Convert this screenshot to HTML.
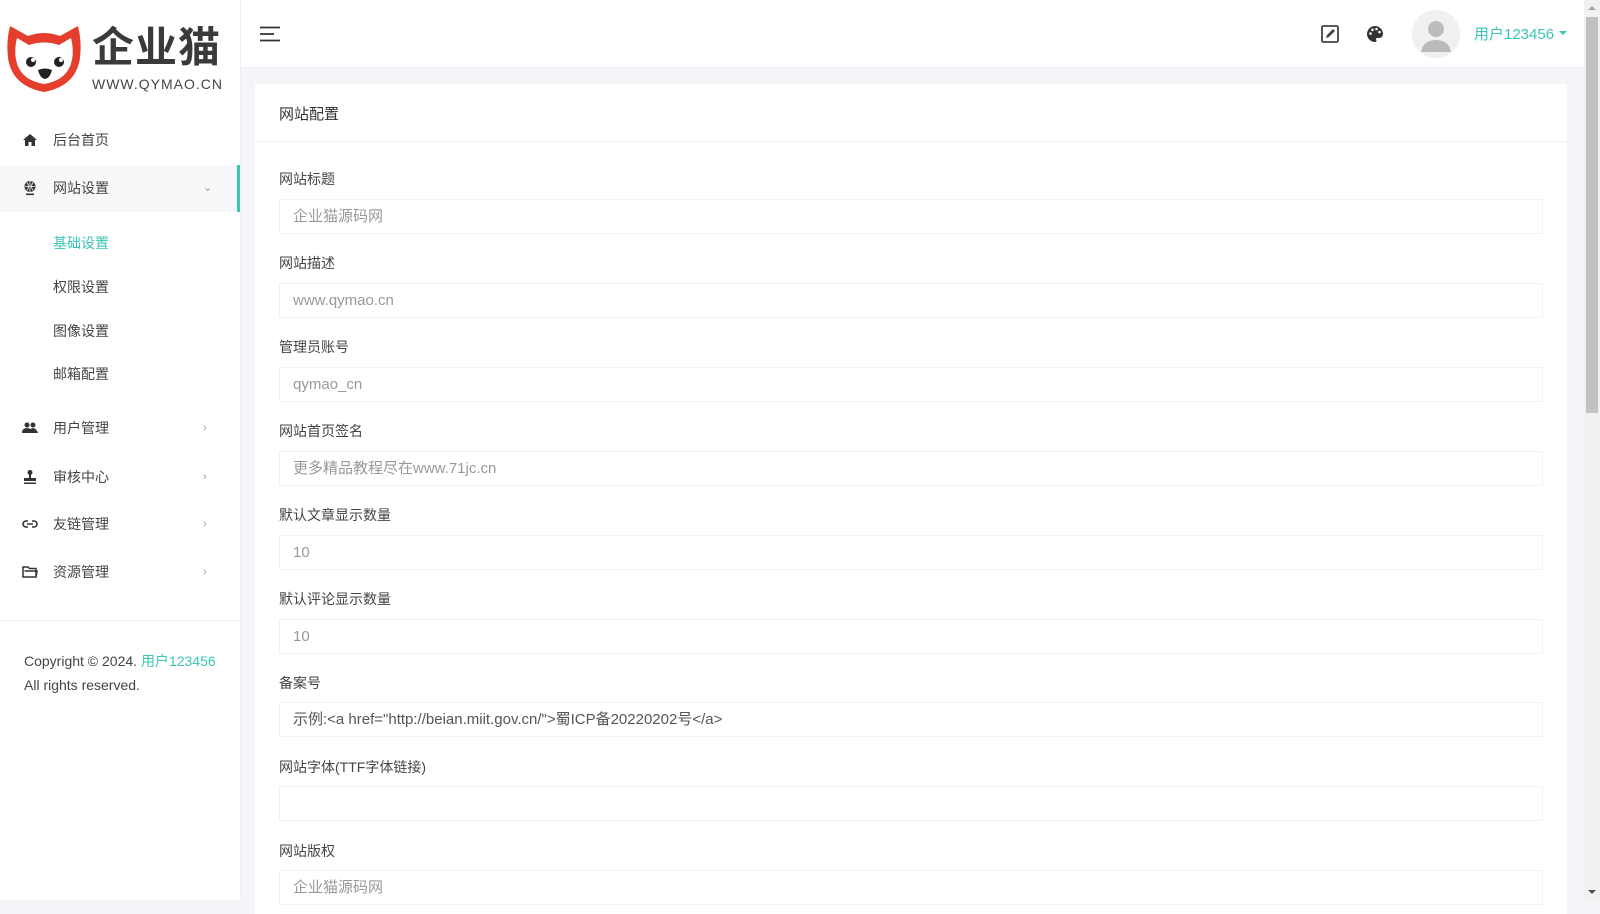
<!DOCTYPE html>
<html><head><meta charset="utf-8">
<style>
*{box-sizing:border-box;margin:0;padding:0}
body{width:1600px;height:900px;overflow:hidden;background:#f3f5f9;font-family:"Liberation Sans","Noto Sans CJK SC",sans-serif;font-size:14px;color:#444;position:relative}
.side{position:absolute;left:0;top:0;width:241px;height:900px;background:#fff;border-right:1px solid #eceef2}
.top{position:absolute;left:241px;top:0;width:1343px;height:68px;background:#fff;border-bottom:1px solid #eceef2}
.mi{position:absolute;left:0;width:240px;height:47px;line-height:47px}
.mi .ic{position:absolute;left:22px;top:15px;width:16px;height:16px}
.mi .t{position:absolute;left:53px;color:#444}
.mi .ar{position:absolute;left:203px;color:#999;font-size:11px}
.sub{position:absolute;left:53px;color:#444}
.card{position:absolute;left:255px;top:84px;width:1312px;height:830px;background:#fff}
.lbl{position:absolute;left:279px;color:#444;font-size:14px}
.inp{position:absolute;left:279px;width:1264px;height:35px;border:1px solid #f0f1f4;border-radius:2px;color:#999;line-height:33px;padding-left:13px;font-size:15px}
.sb{position:absolute;left:1584px;top:0;width:16px;height:900px;background:#f1f1f1}
</style></head><body>
<div class="side">
 <svg style="position:absolute;left:4px;top:22px" width="80" height="72" viewBox="0 0 80 72">
  <path d="M6 4 L24 14 Q40 8 56 14 L74 4 Q78 20 76 36 Q72 64 40 70 Q8 64 4 36 Q2 20 6 4Z" fill="#e63e2c"/>
  <path d="M13 16 L25 23 Q40 18 55 23 L67 16 Q70 28 68 38 Q64 58 40 62 Q16 58 12 38 Q10 28 13 16Z" fill="#fff"/>
  <circle cx="27" cy="40" r="5" fill="#222"/><circle cx="55" cy="40" r="5" fill="#222"/>
  <circle cx="29" cy="38" r="2" fill="#fff"/><circle cx="57" cy="38" r="2" fill="#fff"/>
  <path d="M34 48 Q41 45 48 48 Q46 56 41 57 Q36 56 34 48Z" fill="#222"/>
 </svg>
 <div style="position:absolute;left:92px;top:22px;font-size:42px;font-weight:bold;color:#3a3a3a;line-height:46px;letter-spacing:1px;font-family:'Noto Sans CJK SC',sans-serif">企业猫</div>
 <div style="position:absolute;left:92px;top:76px;font-size:14px;color:#444;letter-spacing:1px">WWW.QYMAO.CN</div>

 <div class="mi" style="top:117px"><svg class="ic" viewBox="0 0 16 16"><path d="M8 2 L1 8 H3 V14 H6.5 V10 H9.5 V14 H13 V8 H15Z" fill="#333"/></svg><span class="t">后台首页</span></div>
 <div class="mi" style="top:165px;background:#f7f8fa"><svg class="ic" viewBox="0 0 16 16"><circle cx="8" cy="6.5" r="5.5" fill="#333"/><path d="M3 6.5h10M8 1v11M5 2.5q3 4 0 8M11 2.5q-3 4 0 8" stroke="#fff" stroke-width=".8" fill="none"/><rect x="4" y="13.5" width="8" height="1.6" fill="#333"/></svg><span class="t">网站设置</span><span class="ar">⌄</span></div>
 <div style="position:absolute;left:237px;top:165px;width:3px;height:47px;background:#3cc5b3"></div>
 <div class="sub" style="top:233px;color:#3cc5b3">基础设置</div>
 <div class="sub" style="top:277px">权限设置</div>
 <div class="sub" style="top:321px">图像设置</div>
 <div class="sub" style="top:364px">邮箱配置</div>
 <div class="mi" style="top:405px"><svg class="ic" viewBox="0 0 16 16"><circle cx="5" cy="5" r="2.5" fill="#333"/><circle cx="11" cy="5" r="2.5" fill="#333"/><path d="M0 13q0-5 5-5t5 5zM7 13q1-5 4-5t5 5z" fill="#333"/></svg><span class="t">用户管理</span><span class="ar">›</span></div>
 <div class="mi" style="top:454px"><svg class="ic" viewBox="0 0 16 16"><circle cx="8" cy="3.5" r="2.5" fill="#333"/><rect x="7" y="5" width="2" height="4" fill="#333"/><rect x="2" y="9" width="12" height="3" fill="#333"/><rect x="2" y="13.5" width="12" height="1.5" fill="#333"/></svg><span class="t">审核中心</span><span class="ar">›</span></div>
 <div class="mi" style="top:501px"><svg class="ic" viewBox="0 0 16 16"><path d="M6 5H4a3 3 0 0 0 0 6h2M10 5h2a3 3 0 0 1 0 6h-2M5 8h6" stroke="#333" stroke-width="1.6" fill="none"/></svg><span class="t">友链管理</span><span class="ar">›</span></div>
 <div class="mi" style="top:549px"><svg class="ic" viewBox="0 0 16 16"><path d="M1 3h5l1.5 1.5H14V13H1Z M2.5 7H15l-1 6" stroke="#333" stroke-width="1.5" fill="none"/></svg><span class="t">资源管理</span><span class="ar">›</span></div>
 <div style="position:absolute;left:0;top:620px;width:240px;border-top:1px solid #eceef2"></div>
 <div style="position:absolute;left:24px;top:649px;color:#444;line-height:24px">Copyright © 2024. <span style="color:#3cc5b3">用户123456</span><br>All rights reserved.</div>
</div>

<div class="top">
 <svg style="position:absolute;left:19px;top:26px" width="21" height="16" viewBox="0 0 21 16"><path d="M0 1.5h20M0 8h14M0 14.5h20" stroke="#333" stroke-width="1.8"/></svg>
 <svg style="position:absolute;left:1080px;top:25px" width="18" height="18" viewBox="0 0 18 18"><rect x="1" y="1" width="16" height="16" rx="1.5" stroke="#444" stroke-width="1.8" fill="none"/><path d="M5 13l1-3 6-6 2 2-6 6z" fill="#444"/></svg>
 <svg style="position:absolute;left:1125px;top:25px" width="18" height="18" viewBox="0 0 18 18"><path d="M9 1a8 8 0 0 0 0 16c1.5 0 1.8-1 1.2-2-.6-1 0-2 1.2-2H13a4 4 0 0 0 4-4c0-4.5-3.6-8-8-8z" fill="#333"/><circle cx="4.5" cy="8.5" r="1.3" fill="#fff"/><circle cx="6.5" cy="4.8" r="1.3" fill="#fff"/><circle cx="10.5" cy="4" r="1.3" fill="#fff"/><circle cx="13.5" cy="7" r="1.3" fill="#fff"/></svg>
 <div style="position:absolute;left:1171px;top:10px;width:48px;height:48px;border-radius:50%;background:#f0f0f0;overflow:hidden"><svg width="48" height="48" viewBox="0 0 48 48"><circle cx="24" cy="19" r="8" fill="#bbb"/><path d="M9 42q2-12 15-12t15 12z" fill="#bbb"/></svg></div>
 <div style="position:absolute;left:1233px;top:23px;color:#3cc5b3;font-size:15px">用户123456</div>
 <div style="position:absolute;left:1318px;top:31px;width:0;height:0;border-left:4px solid transparent;border-right:4px solid transparent;border-top:4px solid #3cc5b3"></div>
</div>

<div class="card">
 <div style="position:absolute;left:24px;top:19px;font-size:15px;color:#333">网站配置</div>
 <div style="position:absolute;left:0;top:57px;width:1312px;border-top:1px solid #f0f1f4"></div>
</div>
<div class="lbl" style="top:169px">网站标题</div><div class="inp" style="top:199px">企业猫源码网</div>
<div class="lbl" style="top:253px">网站描述</div><div class="inp" style="top:283px">www.qymao.cn</div>
<div class="lbl" style="top:337px">管理员账号</div><div class="inp" style="top:367px">qymao_cn</div>
<div class="lbl" style="top:421px">网站首页签名</div><div class="inp" style="top:451px">更多精品教程尽在www.71jc.cn</div>
<div class="lbl" style="top:505px">默认文章显示数量</div><div class="inp" style="top:535px">10</div>
<div class="lbl" style="top:589px">默认评论显示数量</div><div class="inp" style="top:619px">10</div>
<div class="lbl" style="top:673px">备案号</div><div class="inp" style="top:702px;color:#555">示例:&lt;a href="http://beian.miit.gov.cn/"&gt;蜀ICP备20220202号&lt;/a&gt;</div>
<div class="lbl" style="top:757px">网站字体(TTF字体链接)</div><div class="inp" style="top:786px"></div>
<div class="lbl" style="top:841px">网站版权</div><div class="inp" style="top:870px">企业猫源码网</div>

<div class="sb"><div style="position:absolute;left:2px;top:17px;width:12px;height:396px;background:#c1c1c1"></div>
<div style="position:absolute;left:4px;top:6px;border-left:4px solid transparent;border-right:4px solid transparent;border-bottom:4px solid #a3a3a3"></div>
<div style="position:absolute;left:4px;top:890px;border-left:4px solid transparent;border-right:4px solid transparent;border-top:4px solid #505050"></div></div>
</body></html>
